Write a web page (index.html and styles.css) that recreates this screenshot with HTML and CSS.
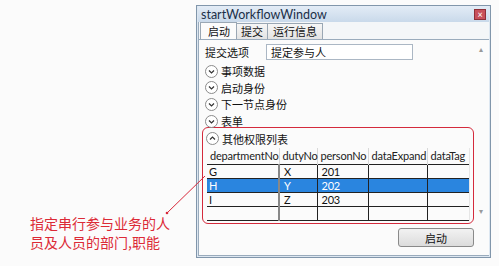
FILE: index.html
```html
<!DOCTYPE html>
<html lang="zh">
<head>
  <meta charset="UTF-8" />
  <title>startWorkflowWindow</title>
  <link rel="stylesheet" href="styles.css">
</head>
<body>
  <div class="win">
    <div class="titlebar">
      <span class="title">startWorkflowWindow</span>
      <span class="close">×</span>
    </div>
    <div class="tabs">
      <span class="tab on">启动</span>
      <span class="tab">提交</span>
      <span class="tab">运行信息</span>
    </div>
    <div class="pane">
      <div class="body">
        <div class="field">
          <span class="lbl">提交选项</span>
          <span class="input">提定参与人</span>
        </div>
        <div class="exp"><svg class="ico" viewBox="0 0 13 13"><circle cx="6.5" cy="6.5" r="6" fill="#fff" stroke="#8a8a8a"/><path d="M4 5.5l2.5 2.5 2.5-2.5" fill="none" stroke="#333" stroke-width="1.2"/></svg>事项数据</div>
        <div class="exp"><svg class="ico" viewBox="0 0 13 13"><circle cx="6.5" cy="6.5" r="6" fill="#fff" stroke="#8a8a8a"/><path d="M4 5.5l2.5 2.5 2.5-2.5" fill="none" stroke="#333" stroke-width="1.2"/></svg>启动身份</div>
        <div class="exp"><svg class="ico" viewBox="0 0 13 13"><circle cx="6.5" cy="6.5" r="6" fill="#fff" stroke="#8a8a8a"/><path d="M4 5.5l2.5 2.5 2.5-2.5" fill="none" stroke="#333" stroke-width="1.2"/></svg>下一节点身份</div>
        <div class="exp"><svg class="ico" viewBox="0 0 13 13"><circle cx="6.5" cy="6.5" r="6" fill="#fff" stroke="#8a8a8a"/><path d="M4 5.5l2.5 2.5 2.5-2.5" fill="none" stroke="#333" stroke-width="1.2"/></svg>表单</div>
        <div class="group">
          <div class="exp"><svg class="ico" viewBox="0 0 13 13"><circle cx="6.5" cy="6.5" r="6" fill="#fff" stroke="#8a8a8a"/><path d="M4 7.5l2.5-2.5 2.5 2.5" fill="none" stroke="#333" stroke-width="1.2"/></svg>其他权限列表</div>
          <table class="grid">
            <colgroup><col class="c1"><col class="c2"><col class="c3"><col class="c4"><col class="c5"></colgroup>
            <tr><th>departmentNo</th><th>dutyNo</th><th>personNo</th><th>dataExpand</th><th>dataTag</th></tr>
            <tr><td>G</td><td>X</td><td>201</td><td></td><td></td></tr>
            <tr class="sel"><td>H</td><td>Y</td><td>202</td><td></td><td></td></tr>
            <tr><td>I</td><td>Z</td><td>203</td><td></td><td></td></tr>
            <tr><td></td><td></td><td></td><td></td><td></td></tr>
          </table>
        </div>
        <div class="foot"><button class="btn">启动</button></div>
      </div>
      <div class="scroll">
        <span class="arr">&#9652;</span>
        <span class="arr">&#9662;</span>
      </div>
    </div>
  </div>

  <svg class="pointer" width="60" height="50" viewBox="0 0 60 50">
    <line x1="5" y1="38" x2="43" y2="1" stroke="#d8283a" stroke-width="1" />
    <circle cx="5" cy="38" r="1.3" fill="#d8283a" />
  </svg>
  <div class="note">指定串行参与业务的人<br>员及人员的部门,职能</div>
</body>
</html>
```

FILE: styles.css
```css
body { margin: 0; background: #fbfbfb; width: 499px; height: 266px; overflow: hidden; position: relative; font-family: Lato, "Noto Sans CJK SC", sans-serif; font-size: 11px; color: #111; }

.win { margin: 5px 0 0 196px; width: 295px; height: 253px; box-sizing: border-box; border: 1px solid #8196ab; background: #dde7f1; padding: 0 1px 1px 1px; display: flex; flex-direction: column; }
.titlebar { height: 16px; display: flex; align-items: center; justify-content: space-between; padding: 0 3px 0 3px; background: linear-gradient(#e3ecf6, #c9d9ea); }
.title { font-family: Lato, sans-serif; font-size: 12.5px; color: #1b2f48; }
.close { width: 10px; height: 9px; background: #c8505a; border: 1px solid #8e2f38; color: #fff; font-size: 9px; line-height: 9px; text-align: center; }

.tabs { display: flex; height: 17px; padding-left: 1px; background: #f4f6f8; border-left: 1px solid #9aabbc; }
.tab { font-family: "Noto Sans CJK SC", sans-serif; font-size: 11px; line-height: 15px; padding: 0 4px; margin-top: 1px; border: 1px solid #9aa7b4; border-bottom: none; background: linear-gradient(#f6f6f6, #e3e3e3); margin-right: -1px; }
.tab.on { background: #fbfbfb; padding: 0 6px 0 7px; margin-top: 0; line-height: 16px; }
.tab:last-child { padding: 0 5px; }

.pane { flex: 1; display: flex; background: #fbfbfb; border: 1px solid #9aabbc; border-right: none; }
.body { flex: 1; padding: 4px 0 0 6px; }
.scroll { width: 10px; display: flex; flex-direction: column; justify-content: space-between; padding: 5px 0 40px; }
.arr { font-size: 8px; color: #999; line-height: 8px; }

.field { display: flex; align-items: center; height: 16px; margin-bottom: 3px; font-family: "Noto Sans CJK SC", sans-serif; }
.lbl { width: 61px; }
.input { width: 141px; height: 14px; line-height: 14px; border: 1px solid #abb7c4; background: #fff; padding-left: 4px; }

.exp { display: flex; align-items: center; height: 16.6px; font-family: "Noto Sans CJK SC", sans-serif; }
.ico { width: 13px; height: 13px; margin-right: 3px; flex: none; }

.group { width: 272px; height: 97px; margin: -2px 0 0 -3px; border: 1px solid #d42a3c; border-radius: 6px; padding: 2px 0 0 3px; box-sizing: border-box; }
.grid { border-collapse: collapse; table-layout: fixed; width: 262px; margin: 1px 0 0 1px; font-family: Lato, sans-serif; font-size: 11px; letter-spacing: -0.2px; background: #fbfbfb; border-bottom: 1px solid #222; }
.grid th { font-weight: normal; height: 16px; padding: 0 0 0 3px; text-align: left; border-right: 1px solid #d8d8d8; color: #222; white-space: nowrap; }
.grid th:last-child { border-right: 1px solid #e6e6e6; }
.grid td { height: 13px; padding: 0 4px; border-top: 1px solid #222; border-right: 1px solid #222; line-height: 13px; }
.grid td:first-child { border-right: 2px solid #888; padding-left: 2px; }
.grid td:last-child { border-right: 1px solid #e6e6e6; }
.grid tr.sel td { background: #2a85df; color: #fff; }
.c1 { width: 72px; } .c2 { width: 38px; } .c3 { width: 51px; } .c4 { width: 59px; } .c5 { width: 42px; }

.foot { display: flex; justify-content: flex-end; padding: 4px 5px 0 0; }
.btn { width: 76px; height: 19px; padding: 0; font-family: "Noto Sans CJK SC", sans-serif; font-size: 11px; border: 1px solid #8a8a8a; border-radius: 3px; background: linear-gradient(#f2f2f2, #dcdcdc); color: #111; }

.pointer { position: absolute; left: 162px; top: 175px; }
.note { position: absolute; left: 30px; top: 214px; font-family: "Noto Sans CJK SC", sans-serif; font-size: 14px; line-height: 19px; color: #dc2a36; }
```
